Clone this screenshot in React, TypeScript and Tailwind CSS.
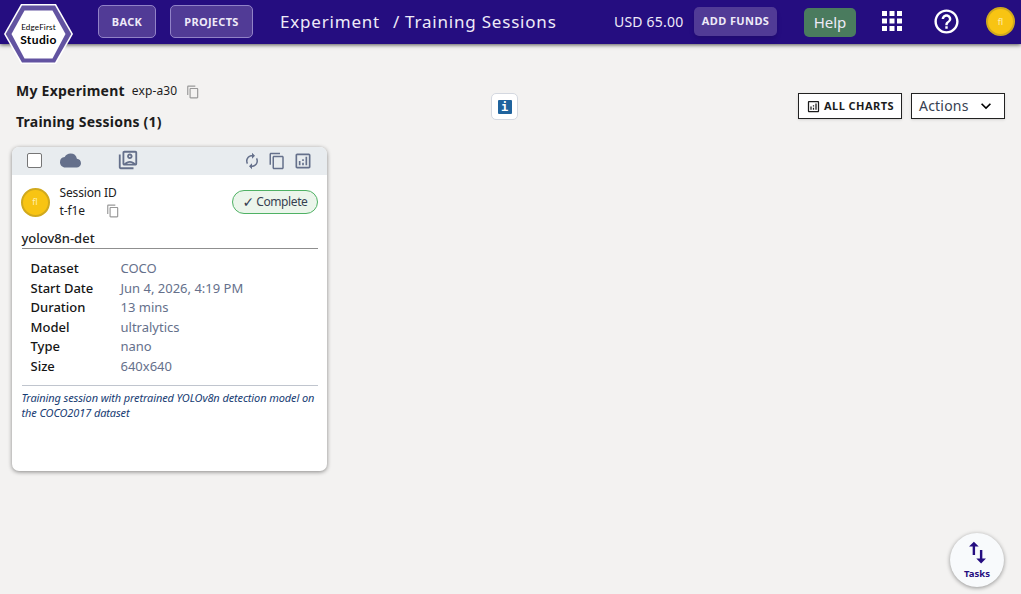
import {
  MdApps,
  MdAutorenew,
  MdCloud,
  MdContentCopy,
  MdHelpOutline,
  MdImportExport,
  MdKeyboardArrowDown,
  MdOutlineAnalytics,
  MdOutlineSwitchAccount,
} from "react-icons/md"
import clsx from "clsx"

const details = [
  { label: "Dataset", value: "COCO" },
  { label: "Start Date", value: "Jun 4, 2026, 4:19 PM" },
  { label: "Duration", value: "13 mins" },
  { label: "Model", value: "ultralytics" },
  { label: "Type", value: "nano" },
  { label: "Size", value: "640x640" },
]

function Logo() {
  return (
    <div className="relative mt-[3px] ml-[3px] h-[62px] w-[71px] shrink-0">
      <svg viewBox="0 0 71 62" className="absolute inset-0 h-full w-full">
        <path d="M18 1H53L70 31L53 61H18L1 31Z" fill="#fff" />
        <path d="M19 2.5H52L68.3 31L52 59.5H19L2.7 31Z" fill="#6253a1" />
        <path d="M21.5 7.5H49.5L62.5 31L49.5 55.5H21.5L8.5 31Z" fill="#fff" />
      </svg>
      <div className="relative flex h-full flex-col items-center pt-[20px] font-['Lato',sans-serif] text-black">
        <span className="text-[8px] leading-[9px] tracking-[0.2px]">EdgeFirst</span>
        <span className="text-[12px] font-bold leading-[15px] tracking-[0.4px]">Studio</span>
      </div>
    </div>
  )
}

function Avatar({ className }: { className?: string }) {
  return (
    <div
      className={clsx(
        "flex h-[29px] w-[29px] shrink-0 items-center justify-center rounded-full border-2 border-[#d1a91d] bg-[#f8c413] text-[9px] text-[#fff0b0]",
        className
      )}
    >
      fl
    </div>
  )
}

function Header() {
  return (
    <header className="flex h-[44px] items-start bg-[#250d80] text-[#eeeaf8] shadow-[0_1px_4px_rgba(0,0,0,0.65)]">
      <Logo />
      <button className="mt-[5px] ml-[24px] h-[33px] w-[58px] rounded-[5px] border border-[#9182c7] bg-[#513b96] pt-px text-[11px] font-bold tracking-[0.3px]">
        BACK
      </button>
      <button className="mt-[5px] ml-[14px] h-[33px] w-[83px] rounded-[5px] border border-[#9182c7] bg-[#513b96] pt-px text-[11px] font-bold tracking-[0.3px]">
        PROJECTS
      </button>
      <div className="ml-[27px] flex h-[44px] w-[334px] items-center whitespace-nowrap text-[17px] tracking-[0.8px]">
        <span className="w-[113px]">Experiment</span>
        <span className="w-[12px]">/</span>
        <span>Training Sessions</span>
      </div>
      <span className="flex h-[44px] w-[80px] items-center whitespace-nowrap text-sm tracking-[0.2px]">
        USD 65.00
      </span>
      <button className="mt-[7px] h-[29px] w-[83px] rounded-[5px] bg-[#513b96] text-[11px] font-bold tracking-[0.4px] shadow-md">
        ADD FUNDS
      </button>
      <button className="mt-[8px] ml-[27px] h-[29px] w-[52px] rounded-[5px] bg-[#4a7b5e] text-[15px] leading-[27px]">
        Help
      </button>
      <MdApps className="mt-[6px] ml-[21px] text-[30px] text-white" />
      <MdHelpOutline className="mt-[7px] ml-[25px] text-[29px] text-white" />
      <Avatar className="mt-[7px] ml-[25px]" />
    </header>
  )
}

function SessionCard() {
  return (
    <article className="mt-[14px] ml-[12px] h-[324px] w-[315px] overflow-hidden rounded-[7px] bg-white shadow-[0_1px_4px_rgba(0,0,0,0.45)]">
      <div className="flex h-[28px] items-center bg-[#e8ecef] pb-px text-[#65708b]">
        <input
          type="checkbox"
          aria-label="Select session"
          className="ml-[15px] h-[15px] w-[15px] appearance-none rounded-[2px] border border-[#767676] bg-white"
        />
        <MdCloud className="ml-[18px] text-[21px]" />
        <MdOutlineSwitchAccount className="-mt-[2px] ml-[36px] text-[22px]" />
        <div className="ml-auto mr-[14px] flex items-center gap-[7px]">
          <MdAutorenew className="text-[18px]" />
          <MdContentCopy className="text-[18px]" />
          <MdOutlineAnalytics className="text-[20px]" />
        </div>
      </div>
      <div className="pr-[9px] pl-[9.5px]">
        <div className="flex h-[53px] items-center">
          <Avatar className="-ml-px mt-px" />
          <div className="ml-[10px] text-xs leading-[18px] text-[#202020]">
            <div className="tracking-[-0.15px]">Session ID</div>
            <div className="flex items-center">
              <span className="w-[46px] tracking-[-0.1px]">t-f1e</span>
              <MdContentCopy className="mt-px text-[14px] text-[#999]" />
            </div>
          </div>
          <div className="ml-auto flex h-[24px] w-[86px] items-center justify-center gap-[2px] rounded-full border border-[#4fb164] bg-[#ebf5eb] text-xs text-[#374151]">
            <span className="font-['DejaVu_Sans',sans-serif] text-[14px] leading-none">✓</span>
            <span className="tracking-[-0.4px]">Complete</span>
          </div>
        </div>
        <h3 className="h-[21px] border-b border-[#8f8f8f] text-[13px] font-medium leading-[20px] text-[#222]">
          yolov8n-det
        </h3>
        <dl className="mt-[10px] pl-[9px] text-[13px] leading-[19.6px]">
          {details.map((item) => (
            <div key={item.label} className="flex">
              <dt className="w-[90px] font-medium text-[#151515]">{item.label}</dt>
              <dd className="text-[#65708b]">{item.value}</dd>
            </div>
          ))}
        </dl>
        <p className="mt-[8px] border-t border-[#c0c5ce] pt-[4px] text-[11px] italic leading-[15px] tracking-[-0.11px] text-[#173c73]">
          Training session with pretrained YOLOv8n detection model on the COCO2017 dataset
        </p>
      </div>
    </article>
  )
}

export default function App() {
  return (
    <div className="flex h-[594px] w-[1021px] flex-col bg-[#f3f2f1] font-['Noto_Sans',sans-serif]">
      <Header />
      <main className="flex-1">
        <div className="flex h-[89px] items-start pl-[16px] text-[#1c1c1c]">
          <div className="w-[475px]">
            <div className="mt-[36px] flex h-[22px] items-center">
              <h1 className="text-sm font-bold tracking-[0.25px]">My Experiment</h1>
              <span className="ml-[7px] w-[53px] text-xs tracking-[0.1px]">exp-a30</span>
              <MdContentCopy className="mt-px ml-px text-[14px] text-[#999]" />
            </div>
            <h2 className="mt-[9px] text-sm font-bold leading-[22px] tracking-[0.22px]">Training Sessions (1)</h2>
          </div>
          <button className="mt-[49px] flex h-[27px] w-[27px] items-center justify-center rounded-[5px] border border-[#d4d8e0] bg-white">
            <span className="flex h-[14px] w-[14px] items-center justify-center rounded-[1px] bg-[#1f639d] font-['DejaVu_Sans_Mono',monospace] text-[12px] font-bold leading-none text-white">
              i
            </span>
          </button>
          <button className="mt-[49px] ml-[280px] flex h-[26px] w-[104px] items-center justify-center gap-[3px] whitespace-nowrap border border-[#222] bg-white text-[11px] font-bold tracking-[0.45px] shadow">
            <MdOutlineAnalytics className="text-[15px]" />
            ALL CHARTS
          </button>
          <button className="mt-[49px] ml-[9px] flex h-[26px] w-[94px] items-center justify-between border border-[#222] bg-white pr-[8px] pl-[7px] text-sm tracking-[0.2px] text-[#374151] shadow">
            Actions
            <MdKeyboardArrowDown className="text-[20px] text-black" />
          </button>
        </div>
        <SessionCard />
      </main>
      <button className="absolute top-[533px] left-[950px] flex h-[54px] w-[54px] flex-col items-center rounded-full bg-[#f8fafc] pt-[5px] text-[#250d80] shadow-[0_1px_4px_rgba(0,0,0,0.4)]">
        <MdImportExport className="text-[29px]" />
        <span className="text-[9.5px] font-bold leading-[14px]">Tasks</span>
      </button>
    </div>
  )
}
